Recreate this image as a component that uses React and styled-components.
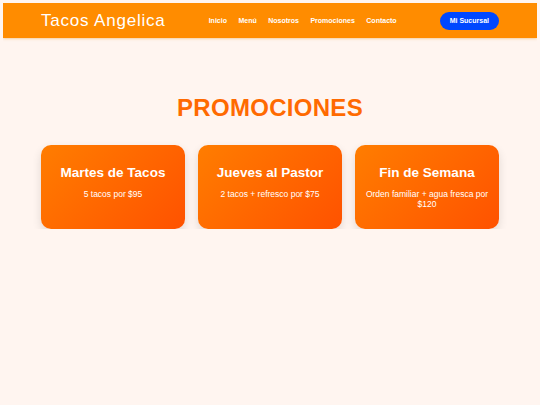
import React from 'react';
import styled, { createGlobalStyle } from 'styled-components';

const GlobalStyle = createGlobalStyle`
    * {
        box-sizing: border-box;
    }
    body {
        margin: 3px;
        background-color: #fff5f0;
        font-family: "Liberation Sans", Arial, sans-serif;
    }
`

const Header = styled.header`
    height: 35px;
    background-color: #ff8c00;
    box-shadow: 0 0 3px rgba(230, 150, 40, 0.7);
    display: flex;
    align-items: center;
    justify-content: space-between;
    padding: 0 38px;
`
const Logo = styled.div`
    color: #ffffff;
    font-size: 17px;
    letter-spacing: 0.8px;
`
const Nav = styled.nav`
    display: flex;
    gap: 11.5px;
`
const NavLink = styled.a`
    color: #ffffff;
    font-size: 7px;
    font-weight: bold;
    text-decoration: none;
`
const Button = styled.button`
    background-color: #0047ff;
    color: #ffffff;
    border: none;
    border-radius: 9px;
    height: 18px;
    padding: 0 10px;
    font-family: inherit;
    font-size: 7px;
    font-weight: bold;
`

const Section = styled.section`
    padding: 56px 38px 0;
`
const Title = styled.h2`
    margin: 0 0 23px;
    text-align: center;
    color: #ff6a00;
    font-size: 24px;
    letter-spacing: 0.3px;
`
const Grid = styled.div`
    display: grid;
    grid-template-columns: repeat(3, 1fr);
    gap: 13px;
`
const Card = styled.div`
    border-radius: 10px;
    background: linear-gradient(135deg, #ff7d00, #ff5200);
    box-shadow: 0 4px 10px rgba(0, 0, 0, 0.12);
    color: #ffffff;
    text-align: center;
    padding: 20px 10px;
`
const CardTitle = styled.h3`
    margin: 0 0 8.5px;
    font-size: 13.5px;
`
const CardText = styled.p`
    margin: 0;
    font-size: 8.5px;
    line-height: 10px;
`

const promos = [
    { title: 'Martes de Tacos', text: '5 tacos por $95' },
    { title: 'Jueves al Pastor', text: '2 tacos + refresco por $75' },
    { title: 'Fin de Semana', text: 'Orden familiar + agua fresca por $120' },
]

const links = ['Inicio', 'Menú', 'Nosotros', 'Promociones', 'Contacto']

export default function App() {
    return (
        <>
            <GlobalStyle />
            <Header>
                <Logo>Tacos Angelica</Logo>
                <Nav>
                    {links.map(link => <NavLink key={link} href="#">{link}</NavLink>)}
                </Nav>
                <Button>Mi Sucursal</Button>
            </Header>
            <Section>
                <Title>PROMOCIONES</Title>
                <Grid>
                    {promos.map(promo => (
                        <Card key={promo.title}>
                            <CardTitle>{promo.title}</CardTitle>
                            <CardText>{promo.text}</CardText>
                        </Card>
                    ))}
                </Grid>
            </Section>
        </>
    )
}
